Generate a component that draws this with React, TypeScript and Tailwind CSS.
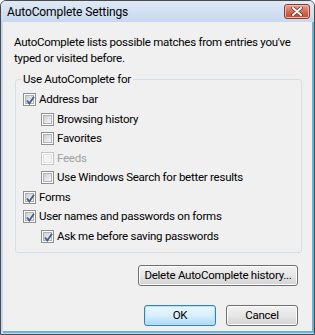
import type { ReactNode } from "react";

const font = { fontFamily: 'Roboto, "Noto Sans", sans-serif' };

function Check({ checked, disabled }: { checked?: boolean; disabled?: boolean }) {
  return (
    <span
      className={`relative flex h-[13px] w-[13px] shrink-0 items-center justify-center border bg-white ${
        disabled ? "border-[#c4c4c4]" : "border-[#8e8f8f]"
      }`}
    >
      <span
        className={`h-[9px] w-[9px] border ${
          disabled
            ? "border-[#e2e2e2] bg-[#f4f4f4]"
            : "border-[#aeb3b9] bg-gradient-to-br from-[#cbcfd5] to-[#f6f6f6]"
        }`}
      />
      {checked && (
        <svg
          className="absolute left-[1px] top-[1px] h-[11px] w-[11px]"
          viewBox="0 0 11 11"
        >
          <path
            d="M2 5.5 L4.3 8.5 L9 1.8"
            fill="none"
            stroke="#4a5f8f"
            strokeWidth={1.9}
          />
        </svg>
      )}
    </span>
  );
}

function Row({
  children,
  checked,
  disabled,
  indent,
}: {
  children: ReactNode;
  checked?: boolean;
  disabled?: boolean;
  indent?: boolean;
}) {
  return (
    <div
      className={`flex h-[19.5px] items-center gap-[3px] ${
        indent ? "pl-[25px]" : "pl-[7px]"
      } ${disabled ? "text-[#a0a0a0]" : "text-black"}`}
    >
      <Check checked={checked} disabled={disabled} />
      <span>{children}</span>
    </div>
  );
}

function Button({
  children,
  width,
  isDefault,
}: {
  children: ReactNode;
  width: string;
  isDefault?: boolean;
}) {
  return (
    <button
      className={`flex h-[21px] items-center justify-center rounded-[3px] border ${width} ${
        isDefault
          ? "border-[#3c7fb1] bg-gradient-to-b from-[#eaf6fd] via-[#d9f0fc] to-[#a7d9f5] shadow-[inset_0_0_0_1px_#b6e2f7]"
          : "border-[#707070] bg-gradient-to-b from-[#f2f2f2] via-[#e6e6e6] to-[#d2d2d2] shadow-[inset_0_0_0_1px_#fcfcfc]"
      }`}
    >
      {children}
    </button>
  );
}

export default function App() {
  return (
    <div
      className="flex h-[335px] w-[315px] flex-col overflow-hidden rounded-t-[6px] border border-[#4a4a4a] bg-[#c6d8ef] text-[11.5px] leading-[15px] tracking-[-0.25px] text-black"
      style={font}
    >
      {/* Title bar */}
      <div className="flex h-[21px] shrink-0 items-center justify-between bg-gradient-to-b from-[#dfe9f6] to-[#c7d8ef] pl-[6px] pr-[4px]">
        <span className="pt-[1px] text-[12px] tracking-[-0.1px]">AutoComplete Settings</span>
        <span className="flex h-[15px] w-[26px] items-center justify-center rounded-[3px] border border-[#8e3a2c] bg-gradient-to-b from-[#e2a595] via-[#cf6e5b] to-[#c0422c] shadow-[inset_0_0_0_1px_#eeb9ad]">
          <svg className="h-[9px] w-[12px]" viewBox="0 0 12 9">
            <path
              d="M2 1 L10 8 M10 1 L2 8"
              stroke="#6b2a20"
              strokeWidth={3.4}
              strokeLinecap="round"
            />
            <path
              d="M2 1 L10 8 M10 1 L2 8"
              stroke="#ffffff"
              strokeWidth={2}
              strokeLinecap="round"
            />
          </svg>
        </span>
      </div>

      {/* Client area */}
      <div className="ml-[2px] mb-[1px] flex flex-1 flex-col border-b-[2px] border-r-[2px] border-[#62b4e4] bg-[#f0f0f0]">
        <p className="pl-[11px] pr-[8px] pt-[12px] leading-[16px]">
          AutoComplete lists possible matches from entries you've typed or
          visited before.
        </p>

        <fieldset className="ml-[12px] mr-[10px] mt-[6px] rounded-[3px] border border-[#d5dfe5] pb-[6px] pt-[3px]">
          <legend className="ml-[5px] px-[2px]">Use AutoComplete for</legend>
          <Row checked>Address bar</Row>
          <Row indent>Browsing history</Row>
          <Row indent>Favorites</Row>
          <Row indent disabled>
            Feeds
          </Row>
          <Row indent>Use Windows Search for better results</Row>
          <Row checked>Forms</Row>
          <Row checked>User names and passwords on forms</Row>
          <Row checked indent>
            Ask me before saving passwords
          </Row>
        </fieldset>

        <div className="mt-[12px] flex justify-end pr-[14px]">
          <Button width="w-[160px]">Delete AutoComplete history...</Button>
        </div>

        <div className="mt-[19px] flex justify-end gap-[10px] pr-[14px]">
          <Button width="w-[72px]" isDefault>
            OK
          </Button>
          <Button width="w-[72px]">Cancel</Button>
        </div>
      </div>
    </div>
  );
}
